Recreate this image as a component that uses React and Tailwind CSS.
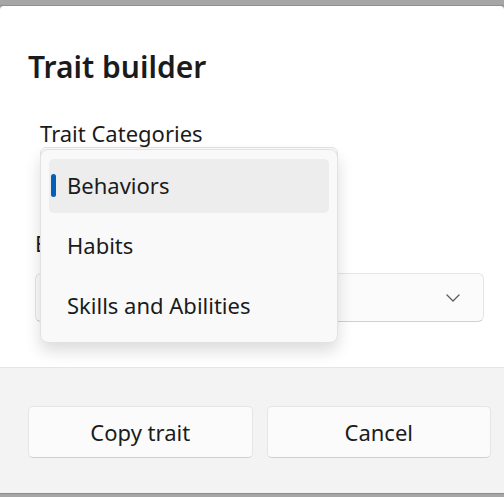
import React from "react";

const font = { fontFamily: '"Noto Sans", "Open Sans", sans-serif' };

export default function App() {
  return (
    <div
      className="w-[504px] h-[497px] bg-[#a6a6a6] flex flex-col overflow-hidden"
      style={font}
    >
      <div className="h-[6px] shrink-0 border-b border-[#8f8f8f]" />
      <div className="flex-1 flex flex-col bg-white rounded-t-[4px]">
        <div className="relative flex-1 flex flex-col">
          <h1 className="pl-[28px] pt-[41px] text-[30px] leading-[40px] font-semibold text-[#1b1b1b]">
            Trait builder
          </h1>
          <div className="pl-[40px] pt-[32px] text-[22px] leading-[28px] text-[#1b1b1b]">
            Trait Categories
          </div>
          <div className="ml-[40px] w-[298px] h-[62px] rounded-[6px] border border-[#e3e3e3] bg-[#fbfbfb]" />
          <div className="pl-[35px] pt-[20px] text-[22px] leading-[28px] text-[#1b1b1b]">
            Examples
          </div>
          <div className="ml-[35px] mt-[16px] w-[449px] h-[49px] rounded-[6px] border border-[#e5e5e5] border-b-[#d0d0d0] bg-[#fbfbfb] flex items-center justify-end pr-[23px]">
            <svg width="14" height="8" viewBox="0 0 14 8" fill="none">
              <path d="M1 1l6 6 6-6" stroke="#5c5c5c" strokeWidth="1.3" strokeLinecap="round" strokeLinejoin="round" />
            </svg>
          </div>

          <div className="absolute left-[40px] top-[143px] w-[298px] h-[194px] rounded-[8px] border border-[#e2e2e2] bg-[#f9f9f9] shadow-[0_8px_16px_rgba(0,0,0,0.14)] px-[8px] pt-[9px] flex flex-col gap-[6px]">
            <div className="relative h-[54px] rounded-[5px] bg-[#ededed] flex items-center pl-[18px] pb-[2px] text-[22px] text-[#1b1b1b]">
              <span className="absolute left-[2px] top-[15px] w-[5px] h-[23px] rounded-full bg-[#005fb8]" />
              Behaviors
            </div>
            <div className="h-[54px] flex items-center pl-[18px] pb-[2px] text-[22px] text-[#1b1b1b]">
              Habits
            </div>
            <div className="h-[54px] flex items-center pl-[18px] pb-[2px] text-[22px] text-[#1b1b1b]">
              Skills and Abilities
            </div>
          </div>
        </div>
        <div className="h-[126px] shrink-0 bg-[#f3f3f3] border-t border-[#e5e5e5] flex gap-[14px] pl-[28px] pr-[13px] pt-[38px]">
          <button className="flex-1 h-[52px] rounded-[5px] border border-[#e5e5e5] border-b-[#cfcfcf] bg-[#fbfbfb] text-[22px] text-[#1b1b1b]">
            Copy trait
          </button>
          <button className="flex-1 h-[52px] rounded-[5px] border border-[#e5e5e5] border-b-[#cfcfcf] bg-[#fbfbfb] text-[22px] text-[#1b1b1b]">
            Cancel
          </button>
        </div>
      </div>
      <div className="h-[4px] shrink-0 border-t border-[#8c8c8c]" />
    </div>
  );
}
